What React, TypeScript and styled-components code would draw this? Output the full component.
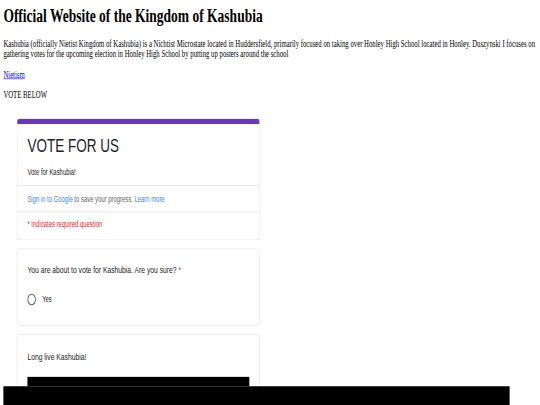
import React from "react";
import styled, { createGlobalStyle } from "styled-components";

// the reference was shot at 1280 wide and squeezed into 540x405
const scaleX = 540 / 1280;
const scaleY = 405 / 691;

const purple = "#673ab7";
const cardBorder = "#dadce0";
const formText = "#202124";
const googleBlue = "#4285f4";
const requiredRed = "#d93025";

const GlobalStyle = createGlobalStyle`
  html, body {
    margin: 0;
    padding: 0;
    background: #fff;
    overflow: hidden;
  }
`;

const Viewport = styled.div`
  width: 540px;
  height: 405px;
  overflow: hidden;
`;

const Page = styled.div`
  width: 1280px;
  box-sizing: border-box;
  padding: 8px;
  transform: scale(${scaleX}, ${scaleY});
  transform-origin: 0 0;
  font-family: "Liberation Serif", "Times New Roman", serif;
  font-size: 16px;
  color: #000;
`;

const PageTitle = styled.h1`
  margin: 0 0 21px;
  font-size: 32px;
  font-weight: bold;
  line-height: 36.8px;
`;

const Para = styled.p`
  margin: 16px 0;
  line-height: 18.4px;
`;

const PageLink = styled.a`
  color: #0000ee;
  text-decoration: underline;
`;

const FormFrame = styled.div`
  width: 640px;
  height: 472px;
  box-sizing: border-box;
  padding-top: 15px;
  overflow: hidden;
  font-family: "Liberation Sans", Arial, sans-serif;
  color: ${formText};
`;

const Card = styled.div<{ $accent?: boolean }>`
  margin: 0 32px 14px;
  background: #fff;
  border: 1px solid ${cardBorder};
  border-top: ${(p) => (p.$accent ? `10px solid ${purple}` : `1px solid ${cardBorder}`)};
  border-radius: 8px;
`;

const HeaderBlock = styled.div`
  padding: 16px 24px 12px;
`;

const FormTitle = styled.div`
  font-size: 32px;
  line-height: 40px;
  font-weight: 400;
`;

const FormDescription = styled.div`
  margin-top: 16px;
  font-size: 14px;
  line-height: 20px;
`;

const InfoRow = styled.div<{ $last?: boolean }>`
  border-top: 1px solid ${cardBorder};
  padding: ${(p) => (p.$last ? "11px 24px 16px" : "12px 24px")};
  font-size: 14px;
  line-height: 20px;
  color: #5f6368;
`;

const BlueText = styled.span`
  color: ${googleBlue};
`;

const RedText = styled.span`
  color: ${requiredRed};
`;

const QuestionBody = styled.div<{ $top?: number }>`
  padding: ${(p) => p.$top ?? 24}px 24px 24px;
`;

const QuestionTitle = styled.div`
  font-size: 16px;
  line-height: 24px;
  color: ${formText};
`;

const OptionRow = styled.label`
  display: flex;
  align-items: center;
  gap: 15px;
  height: 40px;
  margin-top: 18px;
  font-size: 14px;
  color: ${formText};
`;

const RadioCircle = styled.span`
  width: 20px;
  height: 20px;
  box-sizing: border-box;
  border: 2px solid #5f6368;
  border-radius: 50%;
  flex-shrink: 0;
`;

const MediaBlock = styled.div`
  margin-top: 22px;
  height: 200px;
  background: #000;
`;

const WideBlock = styled.div`
  width: 1200px;
  height: 120px;
  background: #000;
`;

export default function App() {
  return (
    <>
      <GlobalStyle />
      <Viewport>
        <Page>
          <PageTitle>Official Website of the Kingdom of Kashubia</PageTitle>
          <Para>
            Kashubia (officially Nietist Kingdom of Kashubia) is a Nichtist Microstate located in
            Huddersfield, primarily focused on taking over Honley High School located in Honley.
            Duszynski I focuses on gathering votes for the upcoming election in Honley High School by
            putting up posters around the school
          </Para>
          <Para>
            <PageLink href="#">Nietism</PageLink>
          </Para>
          <Para>VOTE BELOW</Para>

          <FormFrame>
            <Card $accent>
              <HeaderBlock>
                <FormTitle>VOTE FOR US</FormTitle>
                <FormDescription>Vote for Kashubia!</FormDescription>
              </HeaderBlock>
              <InfoRow>
                <BlueText>Sign in to Google</BlueText> to save your progress.{" "}
                <BlueText>Learn more</BlueText>
              </InfoRow>
              <InfoRow $last>
                <RedText>* Indicates required question</RedText>
              </InfoRow>
            </Card>

            <Card>
              <QuestionBody>
                <QuestionTitle>
                  You are about to vote for Kashubia. Are you sure? <RedText>*</RedText>
                </QuestionTitle>
                <OptionRow>
                  <RadioCircle />
                  Yes
                </OptionRow>
              </QuestionBody>
            </Card>

            <Card>
              <QuestionBody $top={26}>
                <QuestionTitle>Long live Kashubia!</QuestionTitle>
                <MediaBlock />
              </QuestionBody>
            </Card>
          </FormFrame>

          <WideBlock />
        </Page>
      </Viewport>
    </>
  );
}
